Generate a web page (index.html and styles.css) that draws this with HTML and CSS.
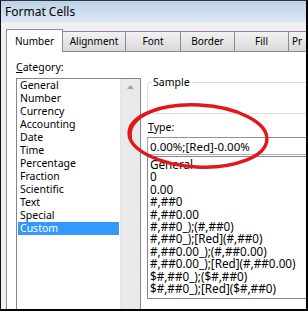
FILE: index.html
```html
<!DOCTYPE html>
<html>
<head>
<title>Format Cells</title>
<link rel="stylesheet" href="styles.css">
</head>
<body>
<div class="dialog">
  <div class="titlebar">Format Cells</div>

  <div class="dialog-body">
    <div class="tabs">
      <div class="tab active">Number</div>
      <div class="tab tab-alignment">Alignment</div>
      <div class="tab tab-font">Font</div>
      <div class="tab tab-border">Border</div>
      <div class="tab tab-fill">Fill</div>
      <div class="tab tab-protect">Pr</div>
    </div>

    <div class="panel">
      <div class="left-col">
        <div class="label"><u>C</u>ategory:</div>
        <div class="listbox">
          <div class="list-items">
            <div class="item">General</div>
            <div class="item">Number</div>
            <div class="item">Currency</div>
            <div class="item">Accounting</div>
            <div class="item">Date</div>
            <div class="item">Time</div>
            <div class="item">Percentage</div>
            <div class="item">Fraction</div>
            <div class="item">Scientific</div>
            <div class="item">Text</div>
            <div class="item">Special</div>
            <div class="item selected">Custom</div>
          </div>
          <div class="scrollbar">
            <svg class="arrow" width="7" height="4" viewBox="0 0 7 4"><path d="M0 4 L3.5 0 L7 4 Z" fill="#a4a4a4"/></svg>
          </div>
        </div>
      </div>

      <div class="right-col">
        <div class="sample">
          <span class="sample-title">Sample</span>
        </div>
        <div class="label type-label"><u>T</u>ype:</div>
        <div class="type-input">0.00%;[Red]-0.00%</div>
        <div class="type-list">
          <div class="code">General</div>
          <div class="code">0</div>
          <div class="code">0.00</div>
          <div class="code">#,##0</div>
          <div class="code">#,##0.00</div>
          <div class="code">#,##0_);(#,##0)</div>
          <div class="code">#,##0_);[Red](#,##0)</div>
          <div class="code">#,##0.00_);(#,##0.00)</div>
          <div class="code">#,##0.00_);[Red](#,##0.00)</div>
          <div class="code">$#,##0_);($#,##0)</div>
          <div class="code">$#,##0_);[Red]($#,##0)</div>
        </div>
      </div>
    </div>
  </div>

  <!-- hand drawn highlight over the Type field -->
  <svg class="circle" width="308" height="311" viewBox="0 0 308 311">
    <g transform="rotate(3 198 136)" fill="none" stroke="#e3161c" stroke-linecap="round">
      <ellipse cx="198" cy="136" rx="69" ry="31" stroke-width="3.4"/>
      <path d="M131 141 C128 128 140 117 160 110" stroke-width="2.4"/>
    </g>
  </svg>
</div>
</body>
</html>
```

FILE: styles.css
```css
body {
  margin: 0;
  font-family: "Noto Sans", "Open Sans", sans-serif;
  color: #000;
}
.dialog {
  position: relative;
  width: 308px;
  height: 311px;
  box-sizing: border-box;
  border-top: 1px solid #333;
  border-left: 1px solid #111;
  border-right: 2px solid #000;
  border-bottom: 2px solid #000;
  background-color: #f0f0f0;
  overflow: hidden;
}
.titlebar {
  height: 21px;
  line-height: 21px;
  padding-left: 4px;
  font-size: 12px;
  background: linear-gradient(#bcd2e9, #dbe8f5);
}
.dialog-body {
  padding: 6px 0 0 5px;
}
.tabs {
  display: flex;
  align-items: flex-end;
  height: 23px;
}
.tab {
  box-sizing: border-box;
  flex-shrink: 0;
  height: 20px;
  line-height: 18px;
  text-align: center;
  font-size: 10px;
  border: 1px solid #898c95;
  border-bottom: none;
  border-left: none;
  background: linear-gradient(#f2f2f2, #e6e6e6 50%, #d9d9d9);
}
.tab.active {
  width: 57px;
  height: 23px;
  line-height: 22px;
  border-left: 1px solid #898c95;
  background: #fff;
  position: relative;
  top: 1px;
}
.tab-alignment { width: 63px; }
.tab-font { width: 55px; }
.tab-border { width: 54px; }
.tab-fill { width: 54px; }
.tab-protect { width: 40px; text-align: left; padding-left: 3px; }
.panel {
  display: flex;
  gap: 6px;
  height: 300px;
  background-color: #fff;
  border-left: 1px solid #898c95;
  border-top: 1px solid #898c95;
  padding-left: 9px;
}
.label {
  font-size: 10.5px;
  height: 13px;
  line-height: 13px;
}
.left-col {
  flex-shrink: 0;
  width: 125px;
  padding-top: 9px;
}
.left-col .label {
  margin-bottom: 4px;
}
.listbox {
  display: flex;
  height: 260px;
  border: 1px solid #828790;
}
.list-items {
  flex: 1;
  padding: 0 1px;
}
.item {
  height: 13px;
  line-height: 13px;
  font-size: 10.5px;
  padding-left: 2px;
}
.item.selected {
  background-color: #3399ff;
  color: #fff;
}
.scrollbar {
  width: 20px;
  background-color: #eaeaea;
  border-left: 1px solid #e3e3e3;
  display: flex;
  justify-content: center;
  padding-top: 6px;
  box-sizing: border-box;
}
.arrow {
  display: block;
}
.right-col {
  flex: 1;
  min-width: 0;
  padding-top: 30px;
}
.sample {
  height: 30px;
  margin-right: -20px;
  border: 1px solid #d5dfe5;
  border-radius: 3px;
  position: relative;
}
.sample-title {
  position: absolute;
  left: 4px;
  top: -8px;
  padding: 0 2px 0 1px;
  background: #fff;
  font-size: 10.5px;
  line-height: 14px;
}
.type-label {
  margin-top: 7px;
  margin-left: 1px;
}
.type-input {
  margin-top: 3px;
  margin-right: -20px;
  height: 18px;
  line-height: 17px;
  box-sizing: border-box;
  border: 1px solid #abadb3;
  border-top-color: #8f9297;
  padding-left: 2px;
  font-size: 11.5px;
}
.type-list {
  margin-top: 1px;
  margin-right: -20px;
  height: 143px;
  box-sizing: border-box;
  border: 1px solid #828790;
  padding: 1px 0 0 2px;
}
.code {
  height: 12.4px;
  line-height: 12.4px;
  font-size: 11.7px;
  white-space: nowrap;
}
.circle {
  position: absolute;
  left: -1px;
  top: -1px;
  pointer-events: none;
}
```
